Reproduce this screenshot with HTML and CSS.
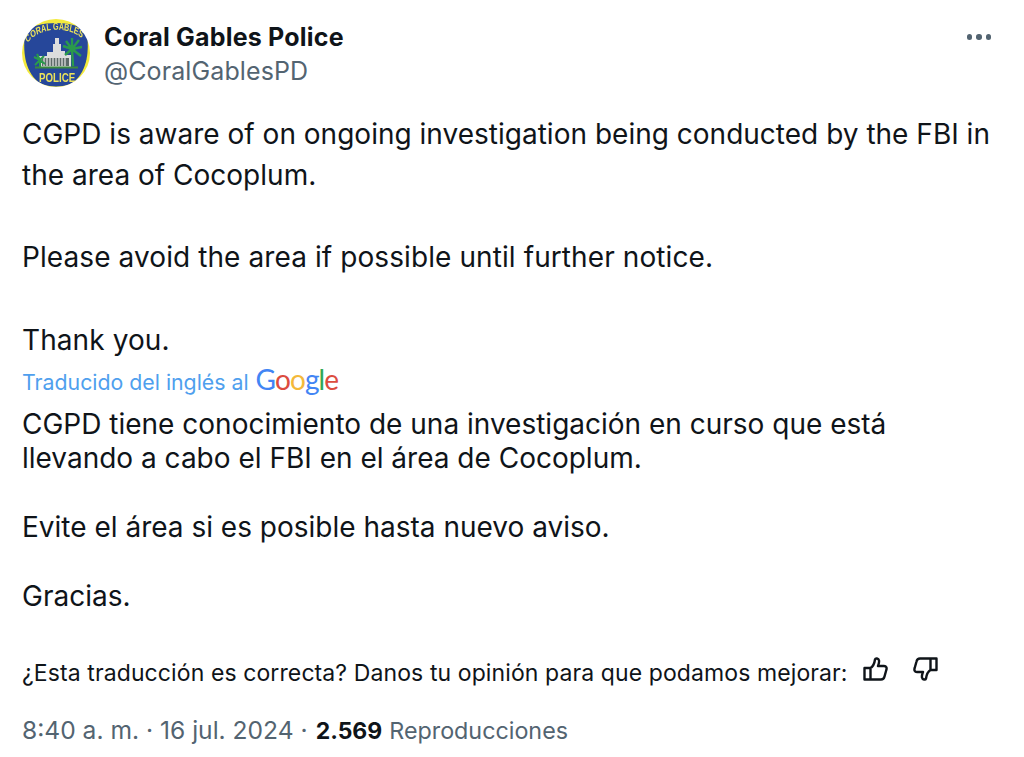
FILE: index.html
```html
<!DOCTYPE html>
<html lang="es">
<head>
<meta charset="utf-8">
<title>Coral Gables Police</title>
<link rel="stylesheet" href="styles.css">
</head>
<body>
<article class="tweet">
  <header class="head">
    <svg class="avatar" viewBox="0 0 68 68" aria-hidden="true">
      <defs>
        <path id="arcTop" d="M8 24 C24 7 70 6 88 23"/>
        <filter id="soft"><feGaussianBlur stdDeviation="0.4"/></filter>
        <clipPath id="round"><circle cx="34" cy="34" r="34"/></clipPath>
      </defs>
      <g clip-path="url(#round)" filter="url(#soft)">
        <rect width="68" height="68" fill="#f3ea3e"/>
        <path d="M3 13 C14 1 54 1 65 13 C67 32 66 50 52 63 C42 69 26 69 16 63 C2 50 1 32 3 13 Z" fill="#27479a"/>
        <text class="logo-top" fill="#ece35a" transform="scale(0.72 1)"><textPath href="#arcTop">CORAL GABLES</textPath></text>
        <path d="M33 19 H37 V25 H39 V32 H43 V36 H49 V48 H17 V37 H25 V33 H31 V25 H33 Z" fill="#dcdddd"/>
        <path d="M20 39 H47 V47 H20 Z" fill="#5d6b68"/>
        <path d="M22 39 V47 M25 39 V47 M28 39 V47 M31 39 V47 M34 39 V47 M37 39 V47 M40 39 V47 M43 39 V47" stroke="#e8e8e8" stroke-width="1.200"/>
        <path d="M13 47.500 H56 V49.500 H13 Z" fill="#3b8a3c"/>
        <path d="M51 47 L50 30 M50 30 L41 27 M50 30 L44 22 M50 30 L50 19 M50 30 L57 21 M50 30 L60 28 M50 30 L59 37 M50 30 L43 36" stroke="#2c9a4c" stroke-width="2.400"/>
        <path d="M18 48 L18 41 M18 41 L12 38 M18 41 L15 35 M18 41 L22 37 M18 41 L13 46 M18 41 L23 45" stroke="#2c9a4c" stroke-width="2"/>
        <text class="logo-bottom" fill="#ece35a" transform="translate(17 63) scale(0.72 1)">POLICE</text>
      </g>
    </svg>
    <div class="names">
      <div class="display">Coral Gables Police</div>
      <div class="handle">@CoralGablesPD</div>
    </div>
    <div class="more" aria-label="Más"><i></i><i></i><i></i></div>
  </header>

  <div class="original">
    <p class="lead">CGPD is aware of on ongoing investigation being conducted by the FBI in the area of Cocoplum.</p>
    <p>Please avoid the area if possible until further notice.</p>
    <p>Thank you.</p>
  </div>

  <div class="credit">
    <span>Traducido del inglés al</span>
    <span class="google"><b class="blue">G</b><b class="red">o</b><b class="yellow">o</b><b class="blue">g</b><b class="green">l</b><b class="red">e</b></span>
  </div>

  <div class="translated">
    <p>CGPD tiene conocimiento de una investigación en curso que está llevando a cabo el FBI en el área de Cocoplum.</p>
    <p>Evite el área si es posible hasta nuevo aviso.</p>
    <p>Gracias.</p>
  </div>

  <div class="feedback">
    <span>¿Esta traducción es correcta? Danos tu opinión para que podamos mejorar:</span>
    <svg class="thumb first" viewBox="0 0 25 24" aria-hidden="true"><path d="M1.500 11 H7.500 V22.500 H1.500 Z M7.500 11 C10 9.500 11.500 6 12 2.500 C12.500 1 15.500 1 16 3.500 C16.400 5.500 15.500 7.500 15 9 H21 C23.500 9 24 11 23.300 13 L21.500 19.500 C21 21.800 19.800 22.500 18 22.500 H7.500" /></svg>
    <svg class="thumb" viewBox="0 0 25 24" aria-hidden="true"><path d="M23.500 13 H17.500 V1.500 H23.500 Z M17.500 13 C15 14.500 13.500 18 13 21.500 C12.500 23 9.500 23 9 20.500 C8.600 18.500 9.500 16.500 10 15 H4 C1.500 15 1 13 1.700 11 L3.500 4.500 C4 2.200 5.200 1.500 7 1.500 H17.500"/></svg>
  </div>

  <footer class="meta">
    <span>8:40 a. m. · 16 jul. 2024 ·</span>
    <strong>2.569</strong>
    <span class="views">Reproducciones</span>
  </footer>
</article>
</body>
</html>
```
FILE: styles.css
```css
* { box-sizing: border-box; }
html, body { margin: 0; height: 100%; background: #fff; }
body { font-family: Inter, "Liberation Sans", sans-serif; color: #0f1419; overflow: hidden; }
p { margin: 0; }

.tweet { padding: 17px 0 0 22px; width: 1024px; }

.head { display: flex; align-items: flex-start; }
.avatar { width: 68px; height: 68px; margin-top: 2px; flex: none; }
.logo-top { font: 700 10px "Liberation Sans", sans-serif; }
.logo-bottom { font: 700 13.500px "Liberation Sans", sans-serif; }
.names { margin: 1px 0 0 14px; flex: 1; }
.display { font-size: 25px; font-weight: 700; line-height: 38px; letter-spacing: 0.2px; }
.handle { font-size: 25px; line-height: 30px; color: #536471; letter-spacing: 0.1px; }
.more { display: flex; gap: 4px; margin: 17px 33px 0 0; }
.more i { width: 5.500px; height: 5.500px; border-radius: 50%; background: #536471; }

.original { margin-top: 26.500px; font-size: 28px; line-height: 41.300px; width: 985px; letter-spacing: 0.09px; }
.original p + p { margin-top: 41.300px; }
.original .lead { letter-spacing: 0.01px; }

.credit { display: flex; align-items: baseline; gap: 7px; margin-top: 0.500px; font-size: 21.300px; line-height: 30px; color: #4f9fee; }
.google { font: 400 28px Lato, sans-serif; letter-spacing: -0.900px; }
.google b { font-weight: 400; }
.blue { color: #4285f4; } .red { color: #dc4c3e; } .yellow { color: #f4b93a; } .green { color: #34a853; }

.translated { margin-top: 10px; font-size: 28px; line-height: 34.400px; width: 900px; }
.translated p + p { margin-top: 34.400px; }

.feedback { display: flex; align-items: center; margin-top: 44px; font-size: 23px; line-height: 30px; letter-spacing: 0.1px; }
.thumb { width: 25px; height: 24px; margin: 0 0 7px 25px; fill: none; stroke: #0f1419; stroke-width: 2.400; stroke-linejoin: round; }
.thumb.first { margin-left: 15px; }

.meta { display: flex; gap: 8px; align-items: baseline; margin-top: 25px; font-size: 24.600px; line-height: 34px; color: #536471; }
.meta strong { color: #0f1419; font-weight: 700; font-size: 23px; }
.views { font-size: 23.300px; margin-left: -1px; }
```
